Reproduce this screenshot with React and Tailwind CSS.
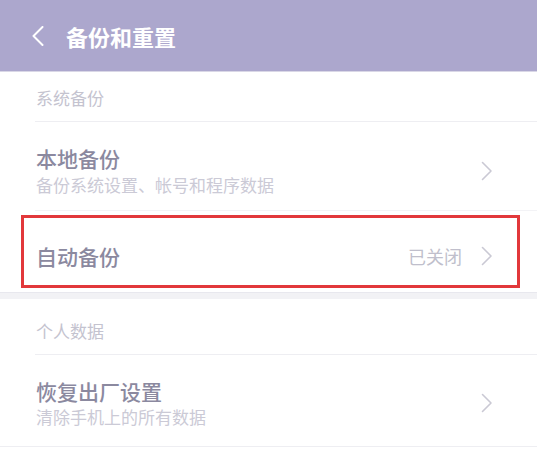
import { ChevronLeft } from 'lucide-react';

const font = { fontFamily: '"Noto Sans CJK SC", "Noto Sans", sans-serif' };

const Arrow = () => (
    <svg width="12" height="20" viewBox="0 0 12 20" className="shrink-0">
        <path d="M1.5 1.5 L10 10 L1.5 18.5" fill="none" stroke="#cac9d4" strokeWidth="1.6" strokeLinejoin="round" strokeLinecap="round" />
    </svg>
);

const BackArrow = () => (
    <svg width="12" height="20" viewBox="0 0 12 20" className="shrink-0">
        <path d="M10.5 1 L1.5 10 L10.5 19" fill="none" stroke="#ffffff" strokeWidth="2" strokeLinejoin="round" strokeLinecap="round" />
    </svg>
);

const App = () => {
    return (
        <div className="w-[537px] h-[450px] bg-white overflow-hidden" style={font}>
            {/* Title bar */}
            <div className="h-[72px] bg-[#aca7cd] border-b border-[#d9d7e6] flex items-center pl-[32px]">
                <BackArrow />
                <span className="ml-[22px] text-white text-[22px] font-bold leading-none">备份和重置</span>
            </div>

            {/* 系统备份 */}
            <div className="pl-[36px] pt-[15px] pb-[12px] text-[17px] leading-[22px] text-[#c4c3cf]">系统备份</div>
            <div className="ml-[35px] h-px bg-[#eeeef2]"></div>

            <div className="flex items-center pl-[36px] pr-[44px] pt-[23px] pb-[14px]">
                <div className="flex-1">
                    <div className="text-[21px] leading-[26px] font-medium text-[#8b899f]">本地备份</div>
                    <div className="text-[17px] leading-[22px] text-[#cbcad6] mt-[3px]">备份系统设置、帐号和程序数据</div>
                </div>
                <Arrow />
            </div>
            <div className="ml-[35px] h-px bg-[#f3f3f6]"></div>

            <div className="relative flex items-center pl-[36px] pr-[44px] pt-[32px] pb-[23px]">
                <div className="flex-1 text-[21px] leading-[26px] font-medium text-[#8b899f]">自动备份</div>
                <span className="text-[18px] leading-[26px] text-[#c0bfcc] mr-[19px]">已关闭</span>
                <Arrow />
                <div className="absolute left-[21px] top-[4px] w-[499px] h-[73px] border-[3px] border-[#e2383b]"></div>
            </div>

            {/* gap band */}
            <div className="h-[7px] bg-[#f2f2f5] border-t border-[#e8e8ee]"></div>

            {/* 个人数据 */}
            <div className="pl-[36px] pt-[21px] pb-[12px] text-[17px] leading-[22px] text-[#c4c3cf]">个人数据</div>
            <div className="ml-[35px] h-px bg-[#eeeef2]"></div>

            <div className="flex items-center pl-[36px] pr-[44px] pt-[23px] pb-[18px]">
                <div className="flex-1">
                    <div className="text-[21px] leading-[26px] font-medium text-[#8b899f]">恢复出厂设置</div>
                    <div className="text-[17px] leading-[22px] text-[#cbcad6] mt-[2px]">清除手机上的所有数据</div>
                </div>
                <Arrow />
            </div>
            <div className="h-px bg-[#eeeef2]"></div>
        </div>
    );
};

export default App;
